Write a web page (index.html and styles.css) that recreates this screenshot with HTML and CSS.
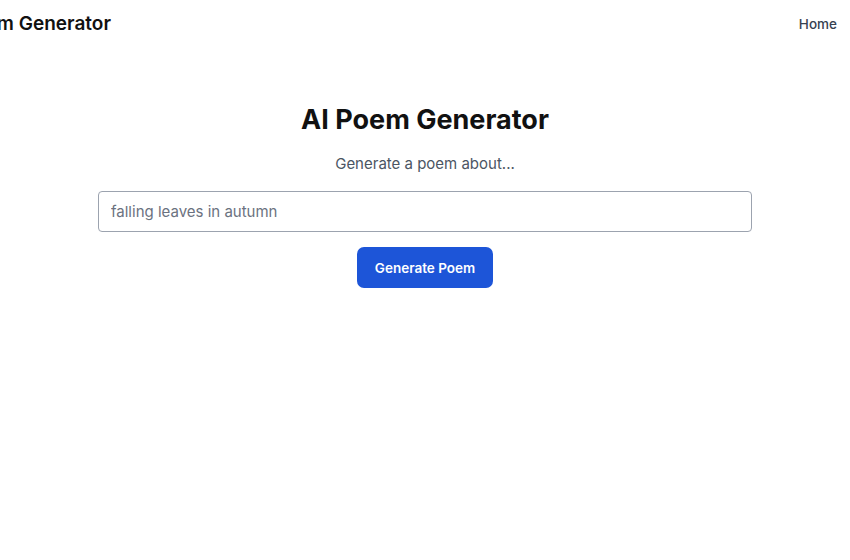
FILE: index.html
```html
<!DOCTYPE html>
<html>
<head>
<meta charset="utf-8">
<link rel="stylesheet" href="styles.css">
</head>
<body>
<header class="topbar">
  <div class="brand">AI Poem Generator</div>
  <nav class="nav"><a class="nav-link" href="#">Home</a></nav>
</header>
<main class="main">
  <h1 class="title">AI Poem Generator</h1>
  <p class="subtitle">Generate a poem about...</p>
  <input class="prompt" type="text" placeholder="falling leaves in autumn">
  <button class="btn">Generate Poem</button>
</main>
</body>
</html>
```
FILE: styles.css
```css
* { box-sizing: border-box; }
html, body { margin: 0; padding: 0; background: #fff; }
body {
  font-family: Inter, "Helvetica Neue", Arial, sans-serif;
  color: #111;
  overflow: hidden;
  width: 850px;
  height: 560px;
}
.topbar {
  height: 46px;
  display: flex;
  align-items: center;
  justify-content: space-between;
  padding-right: 13px;
}
.brand {
  font-size: 19px;
  font-weight: 600;
  color: #111;
  margin-left: -62px;
  white-space: nowrap;
}
.nav-link {
  font-size: 13.5px;
  font-weight: 500;
  color: #374151;
  text-decoration: none;
}
.main {
  display: flex;
  flex-direction: column;
  align-items: center;
  padding-top: 56px;
}
.title {
  margin: 0;
  font-size: 27px;
  font-weight: 700;
  line-height: 36px;
  color: #111;
}
.subtitle {
  margin: 14px 0 0;
  font-size: 15px;
  line-height: 24px;
  color: #4b5563;
}
.prompt {
  margin-top: 15px;
  width: 654px;
  height: 41px;
  border: 1px solid #9ca3af;
  border-radius: 4px;
  padding: 0 12px;
  font-family: inherit;
  font-size: 15px;
  color: #111;
  outline: none;
}
.prompt::placeholder { color: #6b7280; }
.btn {
  margin-top: 15px;
  width: 136px;
  height: 41px;
  border: none;
  border-radius: 7px;
  background: #1d55d8;
  color: #fff;
  font-family: inherit;
  font-size: 13.5px;
  font-weight: 600;
}
```
